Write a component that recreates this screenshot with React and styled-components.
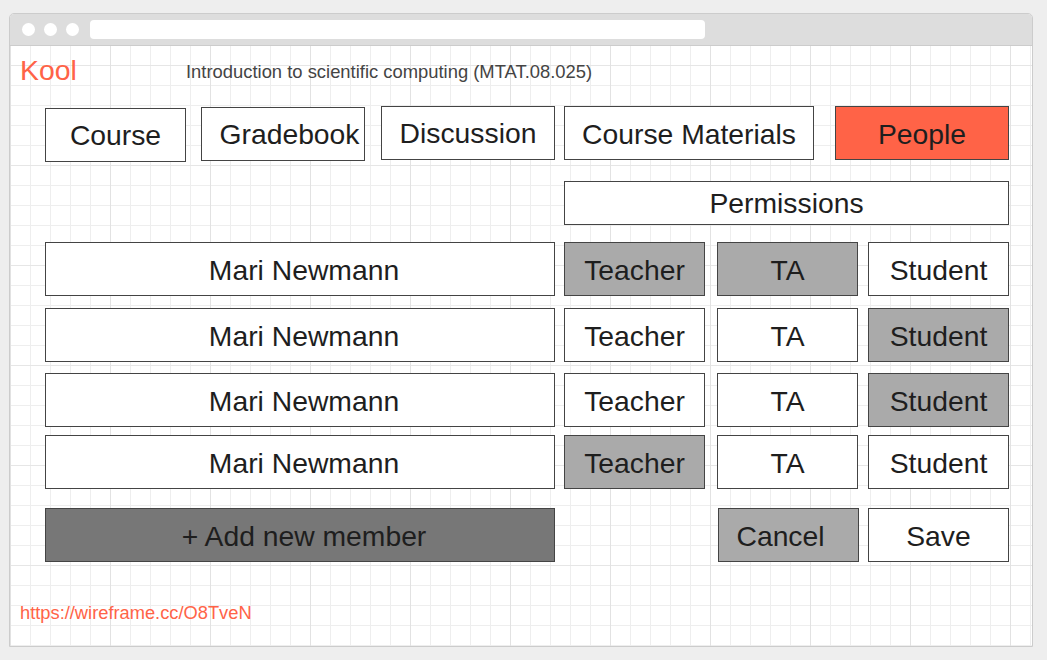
import React from "react";
import styled, { createGlobalStyle } from "styled-components";

const Global = createGlobalStyle`
  * { box-sizing: border-box; }
  html, body { margin: 0; padding: 0; background: #eeeeee; }
  body { font-family: "Liberation Sans", Arial, sans-serif; }
`;

const Page = styled.div`
  padding: 13px 0 0 9px;
  height: 660px;
`;

const Window = styled.div`
  width: 1024px;
  height: 634px;
  border: 1px solid #cccccc;
  border-radius: 5px 5px 0 0;
  background: #ffffff;
  display: flex;
  flex-direction: column;
  overflow: hidden;
`;

const TitleBar = styled.div`
  height: 32px;
  flex: none;
  background: #dddddd;
  border-bottom: 1px solid #cccccc;
  display: flex;
  align-items: center;
  padding-left: 12px;
`;

const Dot = styled.span`
  width: 13px;
  height: 13px;
  border-radius: 50%;
  background: #ffffff;
  margin-right: 9px;
  flex: none;
`;

const AddressBar = styled.div`
  margin-left: 2px;
  width: 615px;
  height: 19px;
  border-radius: 4px;
  background: #ffffff;
`;

const Canvas = styled.div`
  flex: 1;
  background-color: #ffffff;
  background-image:
    linear-gradient(to right, #e2e2e2 1px, transparent 1px),
    linear-gradient(to bottom, #e6e6e6 1px, transparent 1px),
    linear-gradient(to right, #eeeeee 1px, transparent 1px),
    linear-gradient(to bottom, #eeeeee 1px, transparent 1px);
  background-size: 100px 100px, 100px 100px, 20px 20px, 20px 20px;
  background-position: 0 19px, 0 19px, 0 19px, 0 19px;
  display: flex;
  flex-direction: column;
`;

const Header = styled.header`
  display: flex;
  align-items: flex-start;
  padding-left: 10px;
`;

const Logo = styled.div`
  width: 166px;
  margin-top: 9px;
  font-size: 28.4px;
  line-height: 31px;
  color: #ff6347;
`;

const Subtitle = styled.div`
  margin-top: 15px;
  font-size: 18.4px;
  line-height: 22px;
  color: #444444;
`;

const Main = styled.main`
  padding-left: 35px;
  display: flex;
  flex-direction: column;
`;

const Tabs = styled.nav`
  display: flex;
  align-items: flex-start;
  margin-top: 20px;
`;

const Box = styled.div`
  flex: none;
  width: ${(p) => p.$w || 141}px;
  height: ${(p) => p.$h || 54}px;
  margin-left: ${(p) => p.$ml || 0}px;
  border: 1px solid #444444;
  background: ${(p) =>
    p.$tone === "accent"
      ? "#ff6347"
      : p.$tone === "dark"
      ? "#777777"
      : p.$tone === "gray"
      ? "#aaaaaa"
      : "#ffffff"};
  color: #1e1e1e;
  font-size: 28.3px;
  display: flex;
  align-items: center;
  justify-content: center;
  white-space: nowrap;
  overflow: hidden;
  padding-top: ${(p) => (p.$padT === undefined ? 3 : p.$padT)}px;
  padding-left: ${(p) => p.$padL || 0}px;
  padding-right: ${(p) => p.$padR || 0}px;
`;

const Tab = styled(Box)`
  margin-top: ${(p) => p.$dy || 0}px;
`;

const Permissions = styled(Box)`
  margin-top: 19px;
`;

const Row = styled.div`
  display: flex;
  margin-top: ${(p) => p.$mt}px;
`;

const Actions = styled.div`
  display: flex;
  margin-top: 19px;
`;

const Link = styled.div`
  margin: 40px 0 0 10px;
  font-size: 18.3px;
  line-height: 22px;
  color: #ff6347;
`;

const tabs = [
  { label: "Course", w: 141, ml: 0, dy: 2, padT: 0 },
  { label: "Gradebook", w: 164, ml: 15, dy: 1, padL: 13, padT: 1 },
  { label: "Discussion", w: 174, ml: 16, dy: 0, padT: 1 },
  { label: "Course Materials", w: 250, ml: 9, dy: 0 },
  { label: "People", w: 174, ml: 21, dy: 0, tone: "accent" },
];

const members = [
  { mt: 17, roles: ["Teacher", "TA"] },
  { mt: 12, roles: ["Student"] },
  { mt: 11, roles: ["Student"] },
  { mt: 8, roles: ["Teacher"] },
];

const roleCols = [
  { role: "Teacher", ml: 9 },
  { role: "TA", ml: 12 },
  { role: "Student", ml: 10 },
];

export default function App() {
  return (
    <>
      <Global />
      <Page>
        <Window>
          <TitleBar>
            <Dot />
            <Dot />
            <Dot />
            <AddressBar />
          </TitleBar>
          <Canvas>
            <Header>
              <Logo>Kool</Logo>
              <Subtitle>Introduction to scientific computing (MTAT.08.025)</Subtitle>
            </Header>
            <Main>
              <Tabs>
                {tabs.map((t) => (
                  <Tab
                    key={t.label}
                    $w={t.w}
                    $ml={t.ml}
                    $dy={t.dy}
                    $padL={t.padL}
                    $padT={t.padT}
                    $tone={t.tone}
                  >
                    {t.label}
                  </Tab>
                ))}
              </Tabs>
              <Permissions $w={445} $h={44} $ml={519} $padT={0}>
                Permissions
              </Permissions>
              {members.map((m, i) => (
                <Row key={i} $mt={m.mt}>
                  <Box $w={510} $padL={8}>
                    Mari Newmann
                  </Box>
                  {roleCols.map((c) => (
                    <Box
                      key={c.role}
                      $ml={c.ml}
                      $tone={m.roles.includes(c.role) ? "gray" : undefined}
                    >
                      {c.role}
                    </Box>
                  ))}
                </Row>
              ))}
              <Actions>
                <Box $w={510} $tone="dark" $padL={8}>
                  + Add new member
                </Box>
                <Box $ml={163} $tone="gray" $padR={16}>
                  Cancel
                </Box>
                <Box $ml={9}>Save</Box>
              </Actions>
            </Main>
            <Link>https://wireframe.cc/O8TveN</Link>
          </Canvas>
        </Window>
      </Page>
    </>
  );
}
